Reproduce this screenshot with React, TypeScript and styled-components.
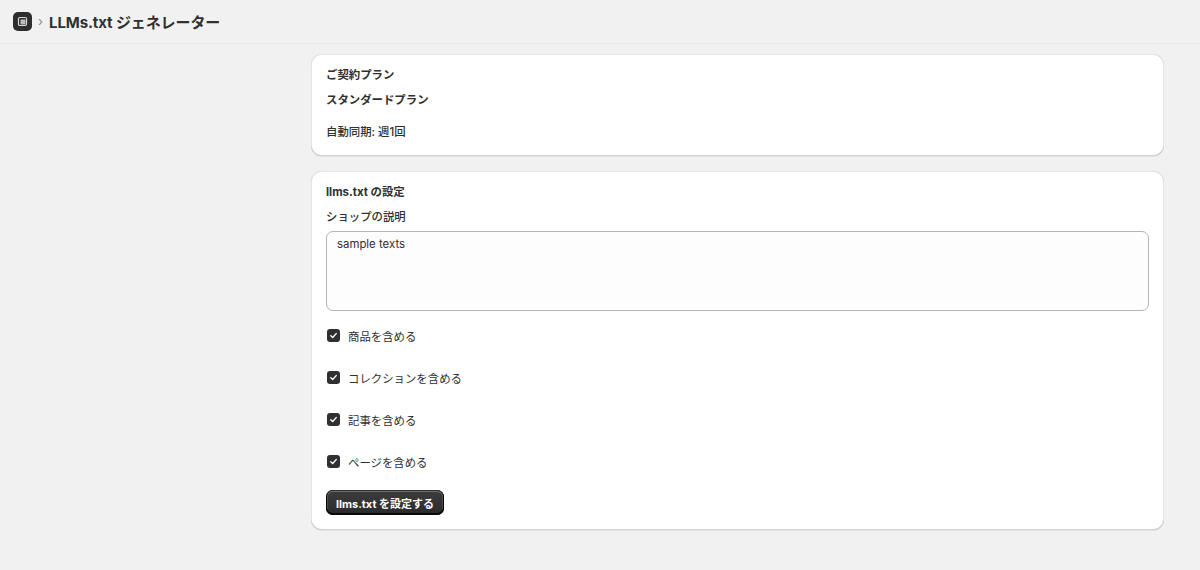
import React from "react";
import styled, { createGlobalStyle } from "styled-components";

const GlobalStyle = createGlobalStyle`
  html, body {
    margin: 0;
    padding: 0;
    background: #f1f1f1;
  }

  body {
    font-family: Inter, "Noto Sans CJK JP", "Noto Sans", sans-serif;
    color: #303030;
    -webkit-font-smoothing: antialiased;
  }
`;

const Page = styled.div`
  width: 1200px;
  min-height: 570px;
  background: #f1f1f1;
`;

const Header = styled.header`
  height: 43px;
  display: flex;
  align-items: center;
  gap: 6px;
  padding: 0 13px;
  border-bottom: 1px solid #e9e9e9;
  box-sizing: content-box;
`;

const AppIcon = styled.svg`
  width: 19px;
  height: 19px;
  flex-shrink: 0;
`;

const Chevron = styled.span`
  color: #8a8a8a;
  font-size: 13px;
  line-height: 1;
  margin-top: -1px;
`;

const PageTitle = styled.h1`
  margin: 0;
  font-size: 15px;
  font-weight: 700;
  color: #303030;
  letter-spacing: -0.1px;
`;

const Content = styled.main`
  padding: 10px 0 40px 311px;
  display: flex;
  flex-direction: column;
  gap: 15px;
`;

const Card = styled.section`
  width: 853px;
  box-sizing: border-box;
  background: #fff;
  border-radius: 11px;
  padding: 13px 15px 15px;
  box-shadow: 0 1px 0 rgba(26, 26, 26, 0.07), 0 1px 0 0 rgba(204, 204, 204, 0.5) inset,
    0 -1px 0 0 rgba(0, 0, 0, 0.17) inset, -1px 0 0 0 rgba(0, 0, 0, 0.1) inset,
    1px 0 0 0 rgba(0, 0, 0, 0.1) inset;
`;

const Text = styled.p<{ bold?: boolean; subdued?: boolean; mt?: number }>`
  margin: ${(p) => p.mt ?? 0}px 0 0;
  font-size: 11.4px;
  line-height: 17px;
  font-weight: ${(p) => (p.bold ? 650 : 450)};
  color: ${(p) => (p.subdued ? "#616161" : "#303030")};
`;

const TextArea = styled.textarea`
  display: block;
  width: 100%;
  height: 80px;
  margin-top: 5px;
  box-sizing: border-box;
  resize: none;
  border: 1px solid #b5b5b5;
  border-radius: 7px;
  background: #fdfdfd;
  padding: 4px 10px;
  font-family: inherit;
  font-size: 11.4px;
  line-height: 17px;
  color: #303030;
  outline: none;
`;

const CheckList = styled.div`
  display: flex;
  flex-direction: column;
  gap: 25px;
  margin-top: 16px;
`;

const CheckRow = styled.label`
  display: flex;
  align-items: center;
  gap: 8px;
  height: 17px;
  font-size: 11.4px;
  color: #303030;
  cursor: pointer;
`;

const Box = styled.span<{ checked: boolean }>`
  width: 13px;
  height: 13px;
  border-radius: 3px;
  margin-left: 1px;
  background: ${(p) => (p.checked ? "#303030" : "#fff")};
  border: ${(p) => (p.checked ? "none" : "1px solid #8a8a8a")};
  display: flex;
  align-items: center;
  justify-content: center;
`;

const PrimaryButton = styled.button`
  margin-top: 20px;
  height: 25px;
  padding: 0 10px;
  border: none;
  border-radius: 7px;
  background: linear-gradient(180deg, #3d3d3d 0%, #2a2a2a 100%);
  box-shadow: 0 -1px 0 1px rgba(0, 0, 0, 0.8) inset, 0 0 0 1px #303030 inset,
    0 0.5px 0 1.5px rgba(255, 255, 255, 0.25) inset;
  color: #fff;
  font-family: inherit;
  font-size: 11px;
  font-weight: 650;
  cursor: pointer;
`;

const options = ["商品を含める", "コレクションを含める", "記事を含める", "ページを含める"];

const CheckMark = () => (
  <svg width="9" height="9" viewBox="0 0 10 10" fill="none">
    <path d="M2 5.2 4.1 7.2 8 2.9" stroke="#fff" strokeWidth="1.6" strokeLinecap="round" strokeLinejoin="round" />
  </svg>
);

const App = () => {
  return (
    <>
      <GlobalStyle />
      <Page>
        <Header>
          <AppIcon viewBox="0 0 19 19">
            <rect width="19" height="19" rx="5" fill="#2e2e2e" />
            <rect x="5.5" y="5.5" width="8" height="8" rx="1.2" fill="none" stroke="#d6d6d6" strokeWidth="1.2" />
            <rect x="7.5" y="7.5" width="5" height="5" rx="0.6" fill="#bdbdbd" />
          </AppIcon>
          <Chevron>›</Chevron>
          <PageTitle>LLMs.txt ジェネレーター</PageTitle>
        </Header>

        <Content>
          <Card>
            <Text bold>ご契約プラン</Text>
            <Text bold mt={8}>
              スタンダードプラン
            </Text>
            <Text mt={15}>自動同期: 週1回</Text>
          </Card>

          <Card>
            <Text bold>llms.txt の設定</Text>
            <Text mt={8}>ショップの説明</Text>
            <TextArea defaultValue="sample texts" />
            <CheckList>
              {options.map((label) => (
                <CheckRow key={label}>
                  <Box checked>
                    <CheckMark />
                  </Box>
                  {label}
                </CheckRow>
              ))}
            </CheckList>
            <PrimaryButton>llms.txt を設定する</PrimaryButton>
          </Card>
        </Content>
      </Page>
    </>
  );
};

export default App;
